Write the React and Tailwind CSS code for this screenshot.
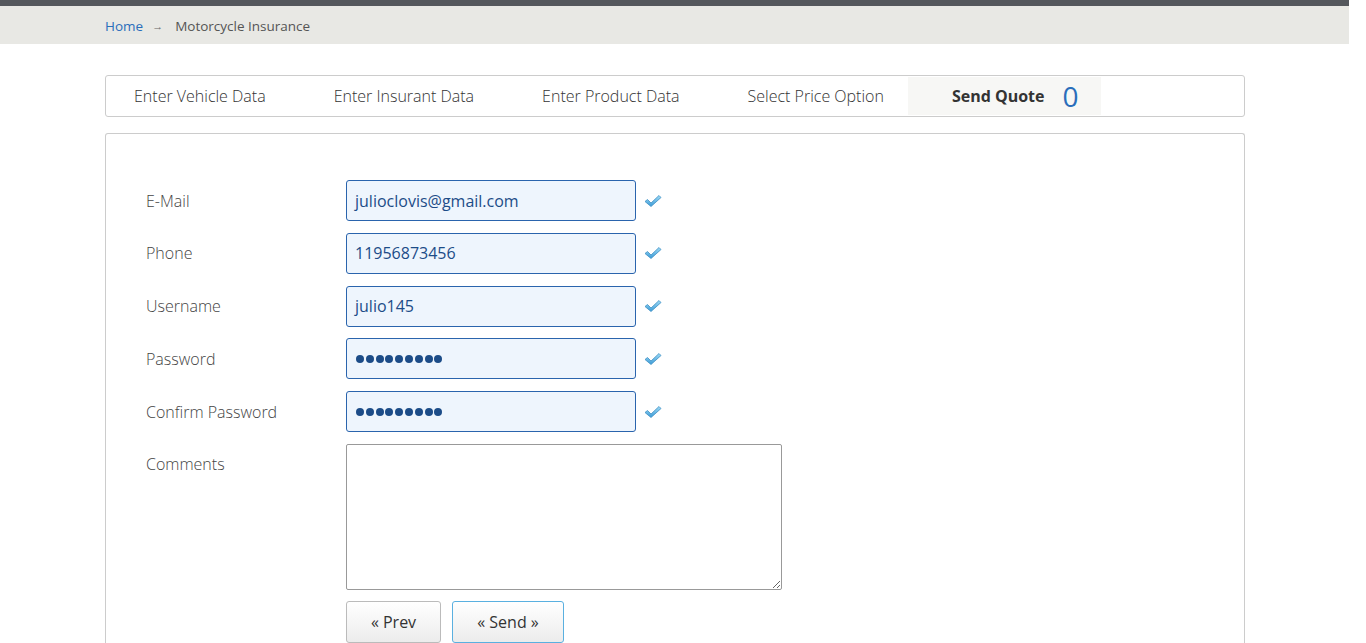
import React from 'react';

const font = { fontFamily: '"Open Sans", "Liberation Sans", sans-serif' };

const Check = () => (
    <svg width="18" height="14" viewBox="0 0 18 14" className="ml-2">
        <defs>
            <linearGradient id="chk" x1="0" y1="0" x2="0" y2="1">
                <stop offset="0" stopColor="#9fdcf6" />
                <stop offset="1" stopColor="#3a9ad6" />
            </linearGradient>
        </defs>
        <path d="M1 7.5 L3.5 5.5 L7 9 L15 1.5 L17 3.5 L7 12.5 Z" fill="url(#chk)" stroke="#3f8fc4" strokeWidth="0.8" strokeLinejoin="round" />
    </svg>
);

const fields = [
    { label: 'E-Mail', value: 'julioclovis@gmail.com' },
    { label: 'Phone', value: '11956873456' },
    { label: 'Username', value: 'julio145' },
    { label: 'Password', dots: 9 },
    { label: 'Confirm Password', dots: 9 },
];

const tabs = ['Enter Vehicle Data', 'Enter Insurant Data', 'Enter Product Data', 'Select Price Option'];

export default function App() {
    return (
        <div className="w-[1349px] min-h-[643px] bg-white" style={font}>
            <div className="h-[6px] bg-[#54575c]"></div>
            <div className="h-[38px] bg-[#e8e8e4] flex items-center pl-[105px] pt-[3px] text-[13.5px]">
                <a className="text-[#2a6ebb]">Home</a>
                <span className="text-[#666] text-[11px] ml-[9px] mr-[12px]">→</span>
                <span className="text-[#555]">Motorcycle Insurance</span>
            </div>

            <div className="w-[1140px] ml-[105px] mt-[31px]">
                <div className="h-[42px] border border-[#cccccc] rounded-[3px] flex items-stretch py-px">
                    {tabs.map((t, i) => (
                        <div key={t} className={`flex items-center px-[24px] text-[16px] font-light text-[#333] ${i === 0 ? 'ml-[4px]' : 'ml-[20px]'}`}>
                            {t}
                        </div>
                    ))}
                    <div className="flex items-center bg-[#f7f7f5] pl-[44px] pr-[22px] text-[16px]">
                        <span className="font-bold text-[#333]">Send Quote</span>
                        <span className="ml-[18px] text-[28px] text-[#2a6ebb] leading-none">0</span>
                    </div>
                </div>

                <div className="mt-[16px] border border-[#cccccc] border-b-0 rounded-t-[3px] pl-[40px] pt-[46px] pb-[10px]">
                    {fields.map((f) => (
                        <div key={f.label} className="flex items-center mb-[11.8px]">
                            <div className="w-[200px] text-[16px] font-light text-[#444]">{f.label}</div>
                            <div className="w-[290px] h-[41px] bg-[#eef5fd] border border-[#2a64ad] rounded-[3px] flex items-center px-[8px] text-[16px] text-[#1c4c88]">
                                {f.dots ? (
                                    <div className="flex gap-[1.8px] pl-[1px]">
                                        {Array.from({ length: f.dots }).map((_, i) => (
                                            <span key={i} className="w-[8px] h-[8px] rounded-full bg-[#1c4c88]"></span>
                                        ))}
                                    </div>
                                ) : (
                                    f.value
                                )}
                            </div>
                            <Check />
                        </div>
                    ))}
                    <div className="flex items-start">
                        <div className="w-[200px] h-[41px] flex items-center text-[16px] font-light text-[#444]">Comments</div>
                        <textarea className="w-[436px] h-[146px] border border-[#999] rounded-[2px] bg-white outline-none"></textarea>
                    </div>
                    <div className="flex ml-[200px] mt-[11px] gap-[11px]">
                        <button className="w-[95px] h-[42px] border border-[#bbbbbb] rounded-[3px] bg-gradient-to-b from-white to-[#ececec] text-[16px] text-[#333]">« Prev</button>
                        <button className="w-[112px] h-[42px] border border-[#5ab0e0] rounded-[3px] bg-gradient-to-b from-white to-[#ececec] text-[16px] text-[#333]">« Send »</button>
                    </div>
                </div>
            </div>
        </div>
    );
}
